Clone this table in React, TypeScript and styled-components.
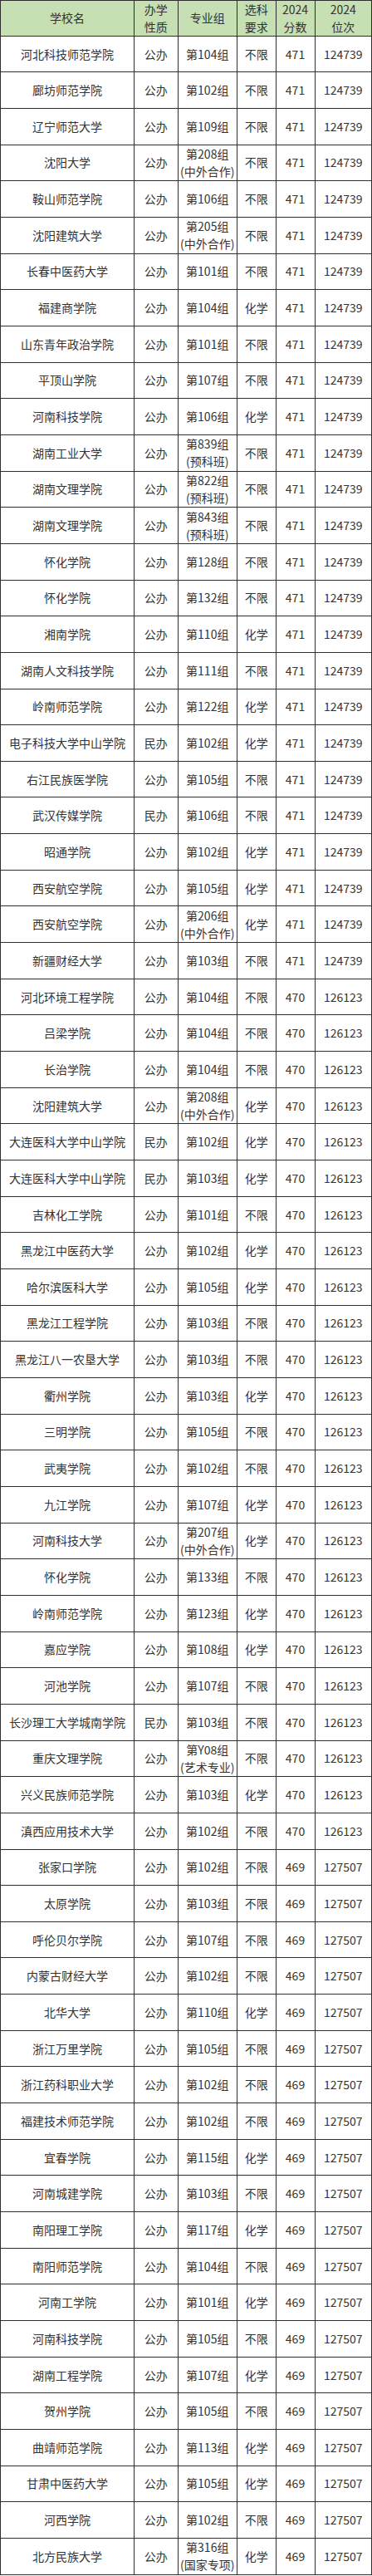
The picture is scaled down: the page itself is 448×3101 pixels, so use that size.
import React from 'react';
import styled, { createGlobalStyle } from 'styled-components';

const GlobalStyle = createGlobalStyle`
    html, body { margin: 0; padding: 0; background: #ffffff; }
    body { font-family: "Noto Sans CJK SC", "Noto Sans", sans-serif; }
`;

type Row = [string, string, string, string, string, string];

// 学校名, 办学性质, 专业组, 选科要求, 分数, 位次
const rows: Row[] = [
    ['河北科技师范学院', '公办', '第104组', '不限', '471', '124739'],
    ['廊坊师范学院', '公办', '第102组', '不限', '471', '124739'],
    ['辽宁师范大学', '公办', '第109组', '不限', '471', '124739'],
    ['沈阳大学', '公办', '第208组\n(中外合作)', '不限', '471', '124739'],
    ['鞍山师范学院', '公办', '第106组', '不限', '471', '124739'],
    ['沈阳建筑大学', '公办', '第205组\n(中外合作)', '不限', '471', '124739'],
    ['长春中医药大学', '公办', '第101组', '不限', '471', '124739'],
    ['福建商学院', '公办', '第104组', '化学', '471', '124739'],
    ['山东青年政治学院', '公办', '第101组', '不限', '471', '124739'],
    ['平顶山学院', '公办', '第107组', '不限', '471', '124739'],
    ['河南科技学院', '公办', '第106组', '化学', '471', '124739'],
    ['湖南工业大学', '公办', '第839组\n(预科班)', '不限', '471', '124739'],
    ['湖南文理学院', '公办', '第822组\n(预科班)', '不限', '471', '124739'],
    ['湖南文理学院', '公办', '第843组\n(预科班)', '不限', '471', '124739'],
    ['怀化学院', '公办', '第128组', '不限', '471', '124739'],
    ['怀化学院', '公办', '第132组', '不限', '471', '124739'],
    ['湘南学院', '公办', '第110组', '化学', '471', '124739'],
    ['湖南人文科技学院', '公办', '第111组', '不限', '471', '124739'],
    ['岭南师范学院', '公办', '第122组', '化学', '471', '124739'],
    ['电子科技大学中山学院', '民办', '第102组', '化学', '471', '124739'],
    ['右江民族医学院', '公办', '第105组', '不限', '471', '124739'],
    ['武汉传媒学院', '民办', '第106组', '不限', '471', '124739'],
    ['昭通学院', '公办', '第102组', '化学', '471', '124739'],
    ['西安航空学院', '公办', '第105组', '化学', '471', '124739'],
    ['西安航空学院', '公办', '第206组\n(中外合作)', '化学', '471', '124739'],
    ['新疆财经大学', '公办', '第103组', '不限', '471', '124739'],
    ['河北环境工程学院', '公办', '第104组', '不限', '470', '126123'],
    ['吕梁学院', '公办', '第104组', '不限', '470', '126123'],
    ['长治学院', '公办', '第104组', '不限', '470', '126123'],
    ['沈阳建筑大学', '公办', '第208组\n(中外合作)', '化学', '470', '126123'],
    ['大连医科大学中山学院', '民办', '第102组', '化学', '470', '126123'],
    ['大连医科大学中山学院', '民办', '第103组', '化学', '470', '126123'],
    ['吉林化工学院', '公办', '第101组', '不限', '470', '126123'],
    ['黑龙江中医药大学', '公办', '第102组', '化学', '470', '126123'],
    ['哈尔滨医科大学', '公办', '第105组', '化学', '470', '126123'],
    ['黑龙江工程学院', '公办', '第103组', '不限', '470', '126123'],
    ['黑龙江八一农垦大学', '公办', '第103组', '不限', '470', '126123'],
    ['衢州学院', '公办', '第103组', '化学', '470', '126123'],
    ['三明学院', '公办', '第105组', '不限', '470', '126123'],
    ['武夷学院', '公办', '第102组', '不限', '470', '126123'],
    ['九江学院', '公办', '第107组', '化学', '470', '126123'],
    ['河南科技大学', '公办', '第207组\n(中外合作)', '化学', '470', '126123'],
    ['怀化学院', '公办', '第133组', '不限', '470', '126123'],
    ['岭南师范学院', '公办', '第123组', '化学', '470', '126123'],
    ['嘉应学院', '公办', '第108组', '化学', '470', '126123'],
    ['河池学院', '公办', '第107组', '不限', '470', '126123'],
    ['长沙理工大学城南学院', '民办', '第103组', '不限', '470', '126123'],
    ['重庆文理学院', '公办', '第Y08组\n(艺术专业)', '不限', '470', '126123'],
    ['兴义民族师范学院', '公办', '第103组', '化学', '470', '126123'],
    ['滇西应用技术大学', '公办', '第102组', '不限', '470', '126123'],
    ['张家口学院', '公办', '第102组', '不限', '469', '127507'],
    ['太原学院', '公办', '第103组', '不限', '469', '127507'],
    ['呼伦贝尔学院', '公办', '第107组', '不限', '469', '127507'],
    ['内蒙古财经大学', '公办', '第102组', '不限', '469', '127507'],
    ['北华大学', '公办', '第110组', '化学', '469', '127507'],
    ['浙江万里学院', '公办', '第105组', '不限', '469', '127507'],
    ['浙江药科职业大学', '公办', '第102组', '不限', '469', '127507'],
    ['福建技术师范学院', '公办', '第102组', '不限', '469', '127507'],
    ['宜春学院', '公办', '第115组', '化学', '469', '127507'],
    ['河南城建学院', '公办', '第103组', '不限', '469', '127507'],
    ['南阳理工学院', '公办', '第117组', '化学', '469', '127507'],
    ['南阳师范学院', '公办', '第104组', '不限', '469', '127507'],
    ['河南工学院', '公办', '第101组', '化学', '469', '127507'],
    ['河南科技学院', '公办', '第105组', '不限', '469', '127507'],
    ['湖南工程学院', '公办', '第107组', '化学', '469', '127507'],
    ['贺州学院', '公办', '第105组', '不限', '469', '127507'],
    ['曲靖师范学院', '公办', '第113组', '化学', '469', '127507'],
    ['甘肃中医药大学', '公办', '第105组', '化学', '469', '127507'],
    ['河西学院', '公办', '第102组', '不限', '469', '127507'],
    ['北方民族大学', '公办', '第316组\n(国家专项)', '化学', '469', '127507'],
];

const headers = ['学校名', '办学\n性质', '专业组', '选科\n要求', '2024\n分数', '2024\n位次'];

const Table = styled.div`
    width: 448px;
    box-sizing: border-box;
    border-top: 1px solid #2e2e2e;
    border-left: 1px solid #2e2e2e;
    display: flex;
    flex-direction: column;
`;

const TableRow = styled.div<{ $head?: boolean }>`
    display: grid;
    grid-template-columns: 161px 52.5px 71.5px 46.5px 47px 1fr;
    height: ${(p) => (p.$head ? '42.7px' : '43.66px')};
    background: ${(p) => (p.$head ? '#c6e0b4' : '#ffffff')};
`;

const Cell = styled.div`
    box-sizing: border-box;
    border-right: 1px solid #2e2e2e;
    border-bottom: 1px solid #2e2e2e;
    display: flex;
    align-items: center;
    justify-content: center;
    text-align: center;
    white-space: pre-line;
    font-size: 14px;
    line-height: 21px;
    color: #333333;
    overflow: hidden;
`;

export default function App() {
    return (
        <>
            <GlobalStyle />
            <Table>
                <TableRow $head>
                    {headers.map((h, i) => (
                        <Cell key={i}>{h}</Cell>
                    ))}
                </TableRow>
                {rows.map((row, idx) => (
                    <TableRow key={idx}>
                        {row.map((val, i) => (
                            <Cell key={i}>{val}</Cell>
                        ))}
                    </TableRow>
                ))}
            </Table>
        </>
    );
}
